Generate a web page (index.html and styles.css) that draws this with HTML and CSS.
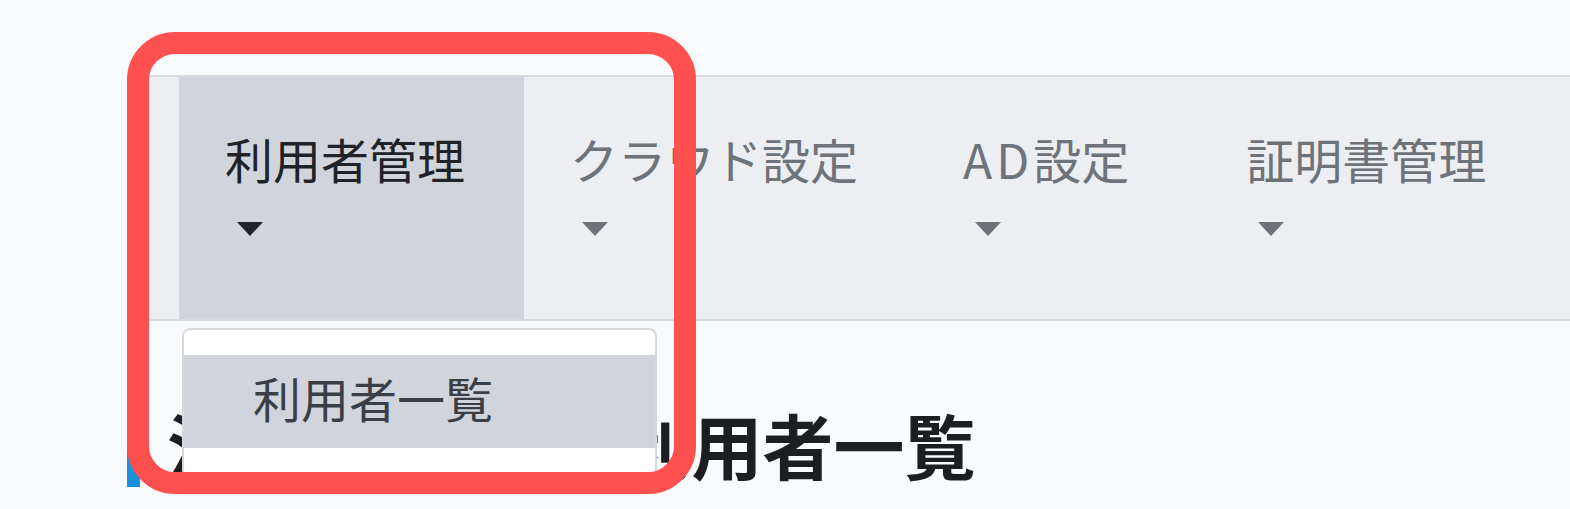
FILE: index.html
```html
<!DOCTYPE html>
<html lang="ja">
<head>
<meta charset="utf-8">
<title>利用者管理</title>
<link rel="stylesheet" href="styles.css">
</head>
<body>
<div class="page">
  <nav class="nav">
    <div class="nav-item active">
      <span class="label">利用者管理</span>
      <span class="caret"></span>
      <div class="dropdown">
        <div class="dd-item">利用者一覧</div>
      </div>
    </div>
    <div class="nav-item">
      <span class="label">クラウド設定</span>
      <span class="caret"></span>
    </div>
    <div class="nav-item wide">
      <span class="label"><span class="latin">AD</span>設定</span>
      <span class="caret"></span>
    </div>
    <div class="nav-item">
      <span class="label">証明書管理</span>
      <span class="caret"></span>
    </div>
  </nav>
  <h1 class="title"><span class="prefix">法人ユーザー</span>利用者一覧</h1>
</div>
<div class="highlight"></div>
</body>
</html>
```
FILE: styles.css
```css
html, body {
  margin: 0;
  padding: 0;
}
body {
  background: #f9fafb;
  font-family: "Noto Sans CJK JP", "Noto Sans", sans-serif;
  height: 509px;
  overflow: hidden;
  position: relative;
}
.page {
  padding: 75px 0 0 128px;
}
.nav {
  display: flex;
  height: 242px;
  background: #eceef1;
  border-top: 2px solid #d6d9de;
  border-bottom: 2px solid #d6d9de;
  border-left: 2px solid #d6d9de;
  padding-left: 49px;
}
.nav-item {
  position: relative;
  display: flex;
  flex-direction: column;
  align-items: flex-start;
  padding: 45px 59px 0 46px;
  color: #6e737a;
}
.nav-item.wide {
  padding-right: 71px;
}
.nav-item.active {
  background: #d1d5db;
  color: #1f2328;
}
.label {
  font-size: 48px;
  line-height: 72px;
  white-space: nowrap;
}
.latin {
  letter-spacing: 4px;
}
.caret {
  width: 0;
  height: 0;
  border-left: 13px solid transparent;
  border-right: 13px solid transparent;
  border-top: 14px solid currentColor;
  margin: 28px 0 0 12px;
}
.dropdown {
  position: absolute;
  top: 251px;
  left: 3px;
  width: 471px;
  background: #ffffff;
  border: 2px solid #d5d9de;
  border-radius: 8px;
  padding: 25px 0 30px;
}
.dd-item {
  background: #d1d5db;
  height: 93px;
  padding-left: 69px;
  font-size: 48px;
  line-height: 84px;
  color: #3a3f46;
  white-space: nowrap;
}
.title {
  margin: 72px 0 0 -1px;
  border-left: 13px solid #1a8fdc;
  padding: 6px 0 0 27px;
  font-size: 71px;
  font-weight: 700;
  line-height: 88px;
  color: #1c1e21;
  white-space: nowrap;
}
.prefix {
  margin-right: 29px;
}
.highlight {
  position: absolute;
  left: 127px;
  top: 32px;
  width: 569px;
  height: 462px;
  box-sizing: border-box;
  border: 22px solid #ff5050;
  border-radius: 48px;
  pointer-events: none;
}
```
